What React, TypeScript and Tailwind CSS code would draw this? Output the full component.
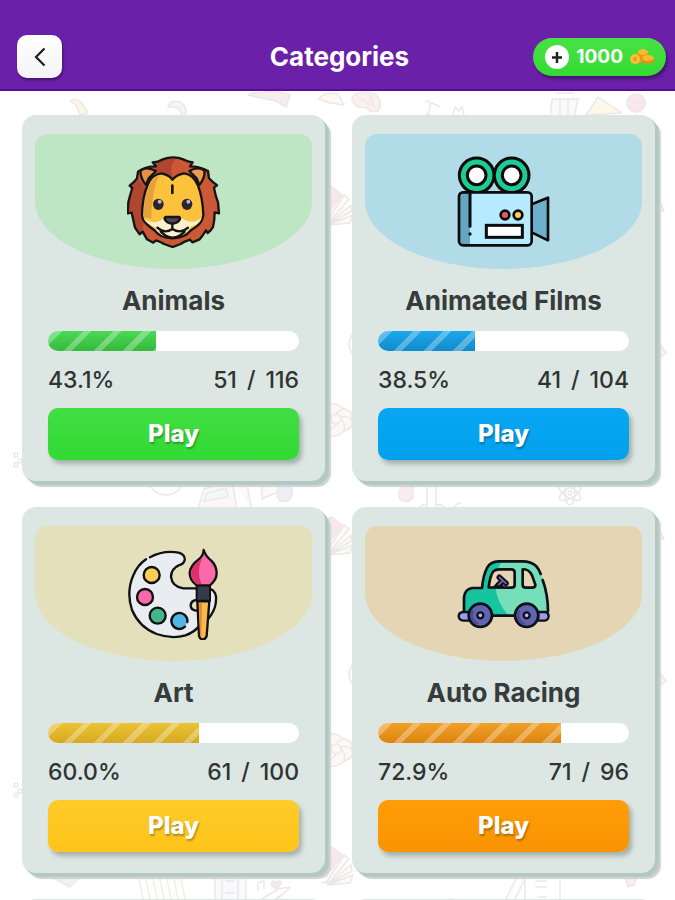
import type { ReactNode } from 'react';

function LionIcon() {
  return (
    <svg viewBox="51 49 282 276" className="w-[94px] h-[92px]" strokeLinecap="round" strokeLinejoin="round" aria-hidden="true">
      <path
        d="M128 68 Q145 68 156 60 Q190 46 222 60 Q232 66 248 68 L240 80 Q270 80 294 94 L297 116 Q308 128 321 137 L312 144 Q316 168 324 188 L327 221 L314 218 Q314 242 309 262 Q304 272 293 280 L288 272 Q278 288 269 299 L247 308 L240 300 Q222 306 212 313 L188 322 L162 313 Q152 306 138 302 L130 309 L111 299 L98 276 L89 284 L75 264 L65 219 L53 221 L55 188 Q60 166 67 145 L59 138 Q72 128 81 116 L84 96 Q104 80 138 80 Z"
        fill="#cc5835"
      />
      <path d="M132 70 Q160 52 200 58 Q176 72 187 112 L160 102 L134 96 Z" fill="#b04630" />
      <path d="M60 138 L84 116 L110 150 L98 276 L89 282 L75 262 L65 219 L54 220 L56 188 L68 145 Z" fill="#b04630" />
      <path
        d="M128 68 Q145 68 156 60 Q190 46 222 60 Q232 66 248 68 L240 80 Q270 80 294 94 L297 116 Q308 128 321 137 L312 144 Q316 168 324 188 L327 221 L314 218 Q314 242 309 262 Q304 272 293 280 L288 272 Q278 288 269 299 L247 308 L240 300 Q222 306 212 313 L188 322 L162 313 Q152 306 138 302 L130 309 L111 299 L98 276 L89 284 L75 264 L65 219 L53 221 L55 188 Q60 166 67 145 L59 138 Q72 128 81 116 L84 96 Q104 80 138 80 Z"
        fill="none" stroke="#151515" strokeWidth="7"
      />
      <path d="M91 94 Q108 78 138 94 L116 116 L108 136 Q92 118 91 94 Z" fill="#e88e48" stroke="#151515" strokeWidth="7" />
      <path d="M284 94 Q266 78 238 94 L260 116 L268 136 Q284 118 284 94 Z" fill="#f09a50" stroke="#151515" strokeWidth="7" />
      <path
        d="M187 120 Q178 106 154 101 Q124 104 112 138 Q97 172 96 228 Q98 246 120 262 L136 274 Q150 294 187 296 Q226 294 240 274 L260 260 Q278 246 280 226 Q278 174 264 138 Q250 104 222 101 Q198 106 187 120 Z"
        fill="#fdc23c" stroke="#151515" strokeWidth="7"
      />
      <path d="M114 148 Q124 116 150 106 Q126 138 124 238 L101 232 Q99 190 114 148 Z" fill="#e5a13c" />
      <path d="M101 236 Q122 254 148 244 Q164 232 187 238 Q212 230 230 244 Q254 252 275 234 Q272 250 244 260 Q228 292 187 292 Q146 292 134 262 Q106 250 101 236 Z" fill="#fff1d0" />
      <path d="M187 138 V160" fill="none" stroke="#151515" strokeWidth="8" />
      <ellipse cx="145" cy="194" rx="16" ry="17" fill="#29242f" />
      <ellipse cx="231" cy="194" rx="16" ry="17" fill="#29242f" />
      <circle cx="149" cy="186" r="6" fill="#b9b4cc" />
      <circle cx="235" cy="186" r="6" fill="#b9b4cc" />
      <path d="M166 232 H208 Q212 236 208 242 Q200 252 187 252 Q174 252 166 242 Q162 236 166 232 Z" fill="#53474d" stroke="#151515" strokeWidth="7" />
      <path d="M187 252 V268 Q164 284 142 264 M187 268 Q212 284 234 264 M152 276 Q188 312 224 276" fill="none" stroke="#151515" strokeWidth="7" />
    </svg>
  );
}

function CameraIcon() {
  return (
    <svg viewBox="51 49 282 276" className="w-[94px] h-[92px]" strokeLinecap="round" strokeLinejoin="round" aria-hidden="true">
      <circle cx="110" cy="107" r="52" fill="#1ecb94" stroke="#0b0b0b" strokeWidth="9" />
      <circle cx="215" cy="107" r="52" fill="#1ecb94" stroke="#0b0b0b" strokeWidth="9" />
      <circle cx="110" cy="107" r="28" fill="#fff" stroke="#0b0b0b" strokeWidth="9" />
      <circle cx="215" cy="107" r="28" fill="#fff" stroke="#0b0b0b" strokeWidth="9" />
      <path d="M275 194 L324 174 V302 L275 278 Z" fill="#6db0cb" stroke="#0b0b0b" strokeWidth="8" />
      <rect x="57" y="158" width="218" height="159" rx="12" fill="#b6eaff" />
      <path d="M90 160 H68 Q58 160 58 170 V304 Q58 316 68 316 H90 Z" fill="#65a7c2" />
      <rect x="57" y="158" width="218" height="159" rx="12" fill="none" stroke="#0b0b0b" strokeWidth="8" />
      <path d="M90 164 V260" fill="none" stroke="#0b0b0b" strokeWidth="9" />
      <circle cx="90" cy="283" r="5" fill="#0b0b0b" />
      <circle cx="195" cy="226" r="13" fill="#f25462" stroke="#0b0b0b" strokeWidth="8" />
      <circle cx="234" cy="226" r="13" fill="#fccf51" stroke="#0b0b0b" strokeWidth="8" />
      <rect x="139" y="257" width="108" height="36" fill="#fff" stroke="#0b0b0b" strokeWidth="9" strokeLinejoin="miter" />
    </svg>
  );
}

function PaletteIcon() {
  return (
    <svg viewBox="51 40 282 276" className="w-[94px] h-[92px]" strokeLinecap="round" strokeLinejoin="round" aria-hidden="true">
      <path
        d="M120 68 Q160 46 206 54 Q226 60 224 76 Q222 88 206 92 Q184 102 183 126 Q186 156 220 161 H292 Q314 162 318 186 Q320 216 304 240 Q290 262 272 268 Q256 292 226 302 Q186 314 140 298 Q88 278 66 226 Q48 172 70 122 Q82 92 108 74"
        fill="#e9edf1" stroke="#101010" strokeWidth="7"
      />
      <circle cx="125" cy="121" r="24" fill="#fbcd55" stroke="#101010" strokeWidth="7" />
      <circle cx="105" cy="187" r="24" fill="#fa69ac" stroke="#101010" strokeWidth="7" />
      <circle cx="143" cy="243" r="24" fill="#42b58b" stroke="#101010" strokeWidth="7" />
      <path d="M225 276 A24 24 0 1 1 232 262" fill="#50b7e7" stroke="#101010" strokeWidth="7" />
      <path d="M262 196 Q242 196 242 214 Q244 228 262 228" fill="#e4e0bc" stroke="#101010" strokeWidth="7" />
      <path d="M262 200 H298 L290 304 Q286 314 279 314 Q270 314 267 304 Z" fill="#fbb94c" stroke="#101010" strokeWidth="7" />
      <path d="M267 204 H276 L274 304 L270 302 Z" fill="#e28b36" />
      <path d="M260 150 H300 V198 H260 Z" fill="#333b4d" stroke="#101010" strokeWidth="6" />
      <path d="M281 46 Q286 64 304 78 Q320 94 320 116 Q320 136 300 152 H260 Q238 136 239 114 Q242 92 264 76 Q280 64 281 46 Z" fill="#fa69a9" stroke="#101010" strokeWidth="7" />
      <path d="M276 72 Q244 92 243 116 Q244 134 262 148 H274 Q258 110 276 72 Z" fill="#db3269" />
    </svg>
  );
}

function CarIcon() {
  return (
    <svg viewBox="51 40 282 276" className="w-[94px] h-[92px]" strokeLinecap="round" strokeLinejoin="round" aria-hidden="true">
      <path
        d="M72 228 V188 Q74 164 96 160 H126 Q130 120 142 98 Q152 81 176 80 H246 Q276 80 290 98 Q312 126 318 164 Q324 196 324 232 L300 243 H90 Z"
        fill="#74dfb9"
      />
      <path d="M72 228 V188 Q74 164 96 160 H126 Q130 120 142 98 Q152 82 184 82 Q166 110 166 154 Q170 204 206 243 H90 Z" fill="#16c5a0" />
      <path
        d="M72 228 V188 Q74 164 96 160 H126 Q130 120 142 98 Q152 81 176 80 H246 Q276 80 290 96 Q298 106 302 118 M308 136 Q324 180 324 230 M150 243 H230"
        fill="none" stroke="#101018" strokeWidth="8"
      />
      <path d="M146 158 Q150 124 160 110 Q166 104 178 104 H214 Q224 104 224 114 V150 Q224 159 214 159 Z" fill="#e4d6b5" stroke="#101018" strokeWidth="8" />
      <path d="M248 104 Q266 102 276 122 L286 150 Q286 159 276 159 H258 Q248 159 248 150 Z" fill="#e4d6b5" stroke="#101018" strokeWidth="8" />
      <path d="M164 156 L176 144 L188 156" fill="#5a4f9e" stroke="#101018" strokeWidth="8" />
      <path d="M178 128 L198 146 M188 138 L176 150" fill="none" stroke="#101018" strokeWidth="17" />
      <path d="M178 128 L198 146 M186 140 L176 150" fill="none" stroke="#6f68b4" strokeWidth="5" />
      <path d="M88 232 H68 Q56 234 56 245 Q58 257 70 258 H88 Z" fill="#9b9de8" stroke="#101018" strokeWidth="7" />
      <path d="M294 232 H316 Q326 234 326 245 Q324 257 314 258 H294 Z" fill="#9b9de8" stroke="#101018" strokeWidth="7" />
      <circle cx="121" cy="242" r="35" fill="#6164ae" stroke="#101018" strokeWidth="8" />
      <circle cx="260" cy="242" r="35" fill="#6164ae" stroke="#101018" strokeWidth="8" />
      <path d="M98 230 A25 25 0 0 0 112 266 M237 230 A25 25 0 0 0 251 266" fill="none" stroke="#4c4a91" strokeWidth="8" />
      <circle cx="121" cy="242" r="9" fill="#b9bced" stroke="#101018" strokeWidth="7" />
      <circle cx="260" cy="242" r="9" fill="#b9bced" stroke="#101018" strokeWidth="7" />
    </svg>
  );
}

function CoinsIcon() {
  return (
    <svg viewBox="0 0 24 18" className="w-6 h-[18px]" aria-hidden="true">
      <path d="M8 4 V11 Q13 14 18 11 V4 Z" fill="#e59a1e" />
      <ellipse cx="13" cy="4" rx="5" ry="3" fill="#fbb92e" />
      <path d="M12 10 V14 Q18 18 24 14 V10 Z" fill="#e08f1a" />
      <ellipse cx="18" cy="10" rx="6" ry="3" fill="#fbb92e" />
      <ellipse cx="7" cy="11" rx="6" ry="5" fill="#e59a1e" />
      <ellipse cx="5" cy="11" rx="5" ry="5" fill="#fbbf38" />
      <ellipse cx="5" cy="11" rx="2" ry="2.5" fill="#e8a024" />
    </svg>
  );
}

/* Faint doodles scattered behind the cards */
function Doodles() {
  return (
    <svg className="absolute inset-0 w-full h-full opacity-20" fill="none" stroke="#a08f92" strokeWidth="1.5" strokeLinejoin="round" strokeLinecap="round" aria-hidden="true">
      <defs>
        <g id="fan">
          <path d="M0 2 L10 -2 L20 6 L4 28 L-14 26 Z" fill="#f08a9e" />
          <path d="M4 34 L22 6 L27 10 L6 35 M6 35 L29 16 L30 22 Z M6 36 L31 26 L28 34 Z" fill="#fbeecb" />
          <path d="M0 34 L22 30" />
          <path d="M5 10 q4 -4 6 1 q-1 5 -7 6 Z" />
        </g>
        <g id="flower">
          <path d="M-14 -14 Q0 -18 8 -10 Q18 -8 15 0 Q20 8 8 12 Q0 20 -14 16 Z" fill="#fbdfd2" />
          <circle r="5" />
          <path d="M-5 0 Q-12 -6 -14 -12 M0 -5 Q4 -10 8 -10 M5 0 Q10 4 8 12 M0 5 Q-4 12 -12 10 M5 -2 Q10 -4 15 0" />
        </g>
        <g id="beads">
          <circle cx="0" cy="0" r="2" />
          <circle cx="4" cy="6" r="2" />
          <circle cx="0" cy="10" r="2" />
        </g>
      </defs>
      <path d="M70 10 Q76 6 82 12 L88 22 L80 24 L76 14 Z" fill="#f7d58a" />
      <path d="M168 16 Q170 8 180 11 Q187 15 186 24 L181 24 Q181 16 174 16 Z" fill="#d8c8cc" />
      <path d="M248 4 Q254 0 262 2 Q272 -2 290 4 L286 16 L276 10 L266 8 L256 6 Z" fill="#e0a8a8" />
      <path d="M319 8 Q324 0 338 3 L344 14 L330 12 Z" fill="#fbdfd2" />
      <path d="M354 4 q12 -6 22 0 q8 8 2 16 q-8 2 -12 -4 q-8 2 -12 -4 q-4 -4 0 -8 Z M362 8 l8 6 M370 4 l4 12" fill="#f2b6b4" />
      <path d="M426 10 q6 0 4 6 l-2 8 m4 -12 l8 4 m-10 8 q-6 -4 -2 4 M453 24 l2 -8 l4 4 l3 -4 l2 8" />
      <path d="M552 8 H578 L574 26 H550 Z M560 8 V26 M568 8 V26 M556 2 h18" fill="#dfe9ee" />
      <path d="M586 24 L598 6 L622 22 Z" fill="#fbe08f" />
      <circle cx="636" cy="12" r="9" fill="#f08a9e" />
      <path d="M628 9 Q636 14 645 11" />

      <use href="#fan" x="322" y="98" />
      <use href="#fan" x="322" y="428" />
      <use href="#fan" x="322" y="758" />
      <use href="#flower" x="336" y="328" />
      <use href="#flower" x="336" y="658" />
      <use href="#beads" x="16" y="364" />
      <use href="#beads" x="16" y="694" />
      <path d="M352 262 q-6 -8 0 -18 M352 592 q-6 -8 0 -18" />
      <path d="M658 106 l6 14 h-8 Z M658 250 l8 12 l-8 6 Z M658 436 l6 12 h-8 Z M658 580 l8 10 l-8 6 Z" fill="#e9c0c8" />

      <circle cx="166" cy="386" r="18" />
      <path d="M158 392 v-6 h6 v8 M168 386 h6 v7 h-6 Z" />
      <path d="M204 398 L232 390 L238 424 L196 424 Z M236 392 L246 388 L252 420" fill="#f7e0da" />
      <path d="M207 402 L226 397 L228 406 L204 410 Z" fill="#bfe5d8" />
      <path d="M262 386 L274 384 L280 400 L262 408 Z" fill="#fbe3e6" />
      <path d="M280 394 q14 -4 12 10 q-2 8 -12 6 q-6 -6 0 -16 Z" fill="#a8b0e0" />
      <path d="M404 394 q-8 8 -4 14 q8 6 13 -2 v-12 Z" fill="#f5a0ae" />
      <path d="M427 386 V424 M436 386 V424 M418 424 q0 -12 9 -10 M446 424 q0 -12 -9 -10 M453 420 q2 -8 8 -8" />
      <ellipse cx="570" cy="402" rx="12" ry="5" transform="rotate(30 570 402)" />
      <ellipse cx="570" cy="402" rx="12" ry="5" transform="rotate(-30 570 402)" />
      <ellipse cx="570" cy="402" rx="5" ry="12" />
      <circle cx="570" cy="402" r="2" />

      <path d="M52 786 L70 796 L82 784 Z" fill="#c9b3d8" />
      <path d="M138 784 l6 28 M145 784 l6 28 M152 784 l6 28 M159 784 l6 28 M166 784 l6 28 M173 784 l6 28 M180 784 l6 28" stroke="#d0a878" />
      <path d="M215 780 H246 V812 H215 Z M222 780 V812 M238 780 V812 M226 790 h8 M226 802 h8" fill="#e5eaf0" />
      <path d="M258 800 v-8 l6 -2 v8 M262 808 l16 -10 l12 -2 l-8 8 l-12 10 M270 812 l14 -10" />
      <path d="M276 798 q-8 -6 -2 -8 q2 0 2 2 q4 -4 5 0 q0 2 -5 6 Z" fill="#f08a9e" />
      <path d="M420 782 q12 8 22 0 M444 812 q8 -8 14 0 M504 812 l14 -28 l7 4 l-12 24 M525 784 H560 V812 H525 Z M536 790 h10 M536 796 h10 M538 806 h8" />
      <path d="M624 784 L640 780 L634 794 L628 796 Z" fill="#e9a8b2" />
    </svg>
  );
}

type Category = {
  name: string;
  done: number;
  total: number;
  percent: number;
  panel: string;
  bar: string;
  button: string;
  icon: ReactNode;
};

const categories: Category[] = [
  {
    name: 'Animals',
    done: 51,
    total: 116,
    percent: 43.1,
    panel: 'bg-[#bee6c4]',
    bar: 'from-[#4cd955] to-[#36b83d]',
    button: 'from-[#41de43] to-[#32da32]',
    icon: <LionIcon />,
  },
  {
    name: 'Animated Films',
    done: 41,
    total: 104,
    percent: 38.5,
    panel: 'bg-[#b0dbe7]',
    bar: 'from-[#1ba7ec] to-[#118bcb]',
    button: 'from-[#09a7f3] to-[#02a0ed]',
    icon: <CameraIcon />,
  },
  {
    name: 'Art',
    done: 61,
    total: 100,
    percent: 60.0,
    panel: 'bg-[#e4e0bc]',
    bar: 'from-[#ebc333] to-[#d6a922]',
    button: 'from-[#fecb28] to-[#fdc41a]',
    icon: <PaletteIcon />,
  },
  {
    name: 'Auto Racing',
    done: 71,
    total: 96,
    percent: 72.9,
    panel: 'bg-[#e4d6b5]',
    bar: 'from-[#f1a027] to-[#dc8510]',
    button: 'from-[#ff9d08] to-[#f99302]',
    icon: <CarIcon />,
  },
];

const cardShadow =
  'shadow-[1px_1px_0_#b3c8c2,2px_2px_0_#b3c8c2,3px_3px_0_#b3c8c2,4px_4px_0_#b9cbc6,6px_6px_1px_#cdd3d2]';

function CategoryCard({ category }: { category: Category }) {
  return (
    <section className={`bg-[#dce6e2] rounded-[14px] px-[13px] pt-[19px] pb-[21px] ${cardShadow}`}>
      <div className={`h-[135px] flex items-center justify-center rounded-[12px_12px_50%_50%/12px_12px_50%_50%] ${category.panel}`}>
        {category.icon}
      </div>
      <div className="px-[13px]">
        <h2 className="mt-4 text-center text-[26px] leading-8 font-bold text-[#373b3b]">{category.name}</h2>
        <div className="mt-[14px] h-5 rounded-full bg-white overflow-hidden">
          <div className={`h-full bg-linear-to-b ${category.bar}`} style={{ width: `${category.percent}%` }}>
            <div className="h-full bg-[repeating-linear-gradient(135deg,transparent_0_4px,rgba(255,255,255,0.3)_4px_10px,transparent_10px_21px)]" />
          </div>
        </div>
        <div className="mt-[13px] flex justify-between text-[23px] leading-8 font-medium text-[#2f3333]">
          <span>{category.percent.toFixed(1)}%</span>
          <span className="flex gap-[10px]">
            <span>{category.done}</span>
            <span>/</span>
            <span>{category.total}</span>
          </span>
        </div>
        <button
          type="button"
          className={`mt-3 w-full h-[52px] rounded-[10px] bg-linear-to-b text-white text-2xl font-extrabold text-shadow-[1px_2px_2px_rgba(0,0,0,0.3)] shadow-[3px_4px_4px_rgba(60,80,75,0.35)] ${category.button}`}
        >
          Play
        </button>
      </div>
    </section>
  );
}

export default function App() {
  return (
    <div className="h-screen flex flex-col overflow-hidden bg-white font-['Inter','Liberation_Sans',sans-serif]">
      {/* Header */}
      <header className="shrink-0 grid grid-cols-[1fr_auto_1fr] items-center pt-[35px] pb-[11px] pl-[13px] pr-[9px] bg-[#6a20a8] border-b-2 border-[#5b0aa0]">
        <button
          type="button"
          aria-label="Back"
          className="ml-1 w-[45px] h-[43px] rounded-[10px] bg-linear-to-b from-white to-[#f4f4f4] flex items-center justify-center shadow-[1px_2px_3px_rgba(0,0,0,0.4)]"
        >
          <svg viewBox="0 0 12 20" className="w-3 h-5" fill="none" stroke="#1c1c1c" strokeWidth="2.2" aria-hidden="true">
            <path d="M10.5 1.5 L2 10 L10.5 18.5" />
          </svg>
        </button>
        <h1 className="text-[26px] leading-8 font-bold text-white">Categories</h1>
        <button
          type="button"
          className="justify-self-end h-[38px] px-3 flex items-center gap-[7px] rounded-full bg-linear-to-b from-[#47e244] to-[#34da33] text-white text-[19px] leading-6 font-bold shadow-[2px_3px_3px_rgba(0,0,0,0.35)]"
        >
          <svg viewBox="0 0 24 24" className="w-6 h-6" aria-hidden="true">
            <circle cx="12" cy="12" r="12" fill="#fff" />
            <path d="M12 7 V18 M7 12.5 H17" stroke="#222" strokeWidth="2.5" />
          </svg>
          <span>1000</span>
          <CoinsIcon />
        </button>
      </header>

      {/* Categories */}
      <main className="relative flex-1 min-h-0 overflow-hidden">
        <Doodles />
        <div className="relative grid grid-cols-2 gap-x-[27px] gap-y-[26px] pt-6 pl-[22px] pr-5">
          {categories.map((category) => (
            <CategoryCard key={category.name} category={category} />
          ))}
          <div className={`h-24 rounded-[14px] bg-[#dce6e2] ${cardShadow}`} />
          <div className={`h-24 rounded-[14px] bg-[#dce6e2] ${cardShadow}`} />
        </div>
      </main>
    </div>
  );
}
